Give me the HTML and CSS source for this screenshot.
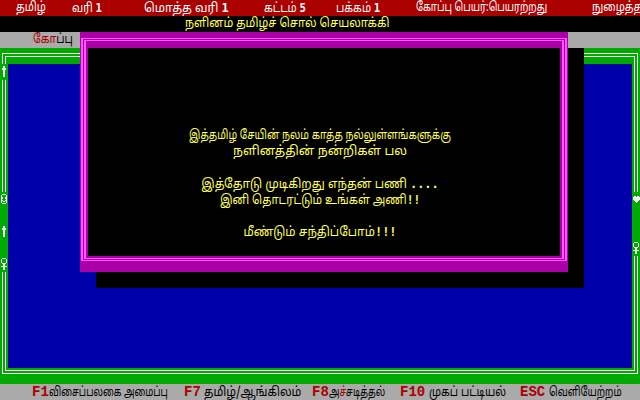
FILE: index.html
```html
<!DOCTYPE html>
<html lang="ta">
<head>
<meta charset="utf-8">
<title>நளினம்</title>
<link rel="stylesheet" href="styles.css">
</head>
<body>
<div class="screen">
  <div class="row status">
    <span class="sq">தமிழ்</span>
    <span class="sq">வரி <b class="num">1</b></span>
    <span class="sq wide">மொத்த வரி <b class="num">1</b></span>
    <span class="sq">கட்டம் <b class="num">5</b></span>
    <span class="sq">பக்கம் <b class="num">1</b></span>
    <span class="sq tight">கோப்பு பெயர்:பெயரற்றது</span>
    <span class="sq">நுழைத்தல்</span>
  </div>
  <div class="row title"><span class="sq loose">நளினம் தமிழ்ச் சொல் செயலாக்கி</span></div>
  <div class="row menu"><span class="sq"><span class="hot">க</span>ோப்பு</span></div>
  <div class="frame">
    <div class="line-outer">
      <div class="line-inner">
        <div class="editor"></div>
      </div>
    </div>
    <div class="mark mark-l1">
      <svg class="cell" viewBox="0 0 8 16" width="8" height="16"><rect x="3" y="2" width="2" height="2"/><rect x="2" y="4" width="4" height="2"/><rect x="3" y="6" width="2" height="7"/></svg>
    </div>
    <div class="mark mark-l2">
      <svg class="cell" viewBox="0 0 8 16" width="8" height="16"><rect x="2" y="2" width="4" height="1"/><rect x="1" y="3" width="1" height="8"/><rect x="6" y="3" width="1" height="8"/><rect x="2" y="11" width="4" height="1"/><rect x="2" y="5" width="1" height="2"/><rect x="5" y="5" width="1" height="2"/><rect x="2" y="8" width="1" height="1"/><rect x="3" y="9" width="2" height="1"/><rect x="5" y="8" width="1" height="1"/></svg>
      <span class="cell"></span>
      <svg class="cell" viewBox="0 0 8 16" width="8" height="16"><rect x="3" y="2" width="2" height="2"/><rect x="2" y="4" width="4" height="2"/><rect x="3" y="6" width="2" height="7"/></svg>
      <span class="cell"></span>
      <svg class="cell" viewBox="0 0 8 16" width="8" height="16"><rect x="2" y="2" width="4" height="1"/><rect x="1" y="3" width="1" height="4"/><rect x="6" y="3" width="1" height="4"/><rect x="2" y="7" width="4" height="1"/><rect x="3" y="8" width="2" height="6"/><rect x="1" y="10" width="6" height="1"/></svg>
    </div>
    <div class="mark mark-r">
      <svg class="cell" viewBox="0 0 8 16" width="8" height="16"><rect x="2" y="4" width="2" height="1"/><rect x="5" y="4" width="2" height="1"/><rect x="1" y="5" width="7" height="3"/><rect x="2" y="8" width="5" height="1"/><rect x="3" y="9" width="3" height="1"/><rect x="4" y="10" width="1" height="1"/></svg>
      <span class="cell"></span>
      <span class="cell"></span>
      <svg class="cell" viewBox="0 0 8 16" width="8" height="16"><rect x="2" y="2" width="4" height="1"/><rect x="1" y="3" width="1" height="4"/><rect x="6" y="3" width="1" height="4"/><rect x="2" y="7" width="4" height="1"/><rect x="3" y="8" width="2" height="6"/><rect x="1" y="10" width="6" height="1"/></svg>
    </div>
  </div>
  <div class="row keys">
    <span><b class="key">F1</b><span class="sq tighter">விசைப்பலகை அமைப்பு</span></span>
    <span><b class="key">F7</b> <span class="sq loose">தமிழ்/ஆங்கிலம்</span></span>
    <span><b class="key">F8</b><span class="sq tighter">அ<span class="hot">ச்</span>சடித்தல்</span></span>
    <span><b class="key">F10</b> <span class="sq">முகப் பட்டியல்</span></span>
    <span><b class="key">ESC</b> <span class="sq tight">வெளியேற்றம்</span></span>
  </div>
  <div class="dialog">
    <div class="dlg-outer">
      <div class="dlg-inner">
        <div class="dlg-body">
          <p class="msg-a">இத்தமிழ் சேயின் நலம் காத்த நல்லுள்ளங்களுக்கு</p>
          <p class="msg-b">நளினத்தின் நன்றிகள் பல</p>
          <p></p>
          <p class="msg-c">இத்தோடு முடிகிறது எந்தன் பணி <b class="num">....</b></p>
          <p class="msg-d">இனி தொடரட்டும் உங்கள் அணி<b class="num">!!</b></p>
          <p></p>
          <p class="msg-c">மீண்டும் சந்திப்போம்<b class="num">!!!</b></p>
        </div>
      </div>
    </div>
  </div>
</div>
</body>
</html>
```

FILE: styles.css
```css
* {
  box-sizing: border-box;
  margin: 0;
  padding: 0;
}

body {
  margin: 0;
  width: 640px;
  height: 400px;
  background: #000;
  overflow: hidden;
  font-family: "Noto Sans Tamil", "Lohit Tamil", "Noto Sans", sans-serif;
  font-size: 13px;
}

.screen {
  position: relative;
  width: 640px;
  height: 400px;
}

.row {
  height: 16px;
  line-height: 16px;
  white-space: nowrap;
  overflow: hidden;
}

/* the DOS bitmap font is narrow: compress the Tamil text horizontally */
.sq {
  display: inline-block;
  transform: scaleX(0.82);
  transform-origin: left center;
}

.sq.tighter {
  transform: scaleX(0.72);
}

.sq.tight {
  transform: scaleX(0.74);
}

.sq.loose {
  transform: scaleX(0.88);
}

.sq.wide {
  transform: scaleX(0.92);
}

.status {
  background: #aa0000;
  color: #fff;
  display: grid;
  grid-template-columns: 56px 72px 120px 72px 80px 176px auto;
  padding-left: 16px;
}

.num {
  font-family: "DejaVu Sans Mono", monospace;
  font-weight: bold;
}

.title {
  background: #000;
  color: #ffff55;
  padding-left: 185px;
}

.menu {
  background: #aaaaaa;
  color: #000;
  padding-left: 33px;
}

.hot {
  color: #aa0000;
}

.frame {
  position: relative;
  height: 336px;
  background: #00aa00;
  padding: 5px 2px 10px;
}

.line-outer {
  height: 100%;
  border: 1px solid #fff;
  padding: 2px;
}

.line-inner {
  height: 100%;
  border: 1px solid #fff;
  padding: 7px 2px 2px;
}

.editor {
  height: 100%;
  background: #0000aa;
}

.mark {
  position: absolute;
  width: 8px;
  background: #00aa00;
  display: flex;
  flex-direction: column;
}

.mark-l1 {
  left: 0;
  top: 16px;
  height: 16px;
}

.mark-l2 {
  left: 0;
  top: 144px;
  height: 80px;
}

.mark-r {
  right: 0;
  top: 144px;
  height: 64px;
}

.cell {
  display: block;
  width: 8px;
  height: 16px;
  flex: none;
  fill: #fff;
  shape-rendering: crispEdges;
}

.keys {
  background: #aaaaaa;
  color: #000;
  display: grid;
  grid-template-columns: 152px 128px 88px 120px auto;
  padding-left: 32px;
}

.key {
  font-family: "Liberation Mono", monospace;
  font-weight: bold;
  font-size: 14px;
  color: #aa0000;
}

.dialog {
  position: absolute;
  left: 80px;
  top: 32px;
  width: 488px;
  height: 240px;
  background: #aa00aa;
  padding: 6px 1px 11px;
  box-shadow: 16px 16px 0 #000;
}

.dlg-outer {
  height: 100%;
  border: solid #ff55ff;
  border-width: 1px 2px;
  padding: 1px;
}

.dlg-inner {
  height: 100%;
  border: solid #ff55ff;
  border-width: 1px 2px;
  padding: 7px 2px 2px;
}

.dlg-body {
  height: 100%;
  background: #000;
  color: #ffff55;
  text-align: center;
  padding-top: 80px;
  padding-right: 8px;
}

.dlg-body p {
  height: 16px;
  line-height: 16px;
  white-space: nowrap;
}

.dlg-body .msg-a {
  transform: scaleX(0.78);
}

.dlg-body .msg-b {
  transform: scaleX(0.97);
}

.dlg-body .msg-c {
  transform: scaleX(0.92);
}

.dlg-body .msg-d {
  transform: scaleX(0.86);
}
```
